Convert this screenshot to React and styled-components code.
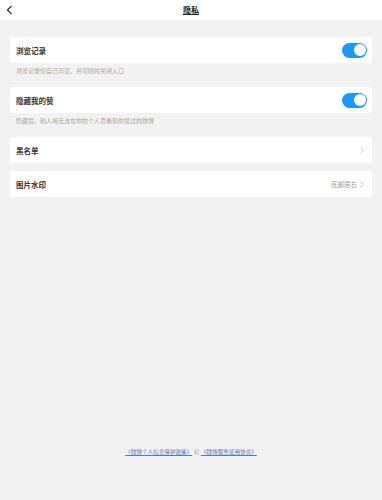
import React from "react";
import styled, { createGlobalStyle } from "styled-components";

const GlobalStyle = createGlobalStyle`
  html, body {
    margin: 0;
    padding: 0;
    background: #f2f2f2;
    font-family: "Noto Sans CJK SC", "Noto Sans", sans-serif;
  }
`;

const Page = styled.div`
  min-height: 100vh;
  display: flex;
  flex-direction: column;
  background: #f2f2f2;
`;

const Header = styled.div`
  height: 20px;
  background: #fff;
  display: flex;
  align-items: center;
  justify-content: center;
  position: relative;
`;

const Back = styled.div`
  position: absolute;
  left: 6px;
  top: 5px;
  width: 8px;
  height: 10px;
  display: flex;
`;

const Title = styled.div`
  font-size: 8px;
  line-height: 10px;
  font-weight: 700;
  color: #222;
  text-decoration: underline;
`;

const Body = styled.div`
  padding: 17px 10px 0;
  display: flex;
  flex-direction: column;
`;

const Card = styled.div`
  height: 26px;
  background: #fff;
  border-radius: 2px;
  display: flex;
  align-items: center;
  justify-content: space-between;
  padding: 0 5px 0 6px;
  margin-bottom: ${(p) => (p.$gap ? "8px" : "0")};
`;

const Label = styled.div`
  font-size: 7.5px;
  font-weight: 700;
  color: #333;
`;

const Desc = styled.div`
  font-size: 6px;
  line-height: 8px;
  color: #a6a6a6;
  padding: 4px 6px 12px;
`;

const Toggle = styled.div`
  width: 25px;
  height: 15px;
  border-radius: 8px;
  background: #1f97f3;
  position: relative;
`;

const Knob = styled.div`
  position: absolute;
  right: 1.5px;
  top: 1.5px;
  width: 12px;
  height: 12px;
  border-radius: 50%;
  background: #fff;
`;

const Right = styled.div`
  display: flex;
  align-items: center;
  gap: 3px;
  padding-right: 3px;
  font-size: 6.5px;
  color: #999;
`;

const Footer = styled.div`
  margin-top: auto;
  padding-bottom: 44px;
  display: flex;
  justify-content: center;
  align-items: center;
  font-size: 5.6px;
  line-height: 8px;
  gap: 1.5px;
`;

const Link = styled.span`
  color: #5a78b4;
  text-decoration: underline;
`;

const And = styled.span`
  color: #b5b5b5;
`;

const Chevron = () => (
  <svg width="4" height="7" viewBox="0 0 4 7">
    <polyline points="0.5,0.5 3.3,3.5 0.5,6.5" fill="none" stroke="#b8b8b8" strokeWidth="0.8" />
  </svg>
);

const Switch = () => (
  <Toggle>
    <Knob />
  </Toggle>
);

export default function App() {
  return (
    <>
      <GlobalStyle />
      <Page>
        <Header>
          <Back>
            <svg width="8" height="10" viewBox="0 0 8 10">
              <polyline points="5.5,0.8 1.5,5 5.5,9.2" fill="none" stroke="#222" strokeWidth="1.2" />
            </svg>
          </Back>
          <Title>隐私</Title>
        </Header>
        <Body>
          <Card>
            <Label>浏览记录</Label>
            <Switch />
          </Card>
          <Desc>浏览记录仅自己可见，并可随时关闭入口</Desc>
          <Card>
            <Label>隐藏我的赞</Label>
            <Switch />
          </Card>
          <Desc>隐藏后，别人将无法在你的个人页看到你赞过的微博</Desc>
          <Card $gap>
            <Label>黑名单</Label>
            <Right>
              <Chevron />
            </Right>
          </Card>
          <Card>
            <Label>图片水印</Label>
            <Right>
              底部居右
              <Chevron />
            </Right>
          </Card>
        </Body>
        <Footer>
          <Link>《微博个人信息保护政策》</Link>
          <And>和</And>
          <Link>《微博服务使用协议》</Link>
        </Footer>
      </Page>
    </>
  );
}
